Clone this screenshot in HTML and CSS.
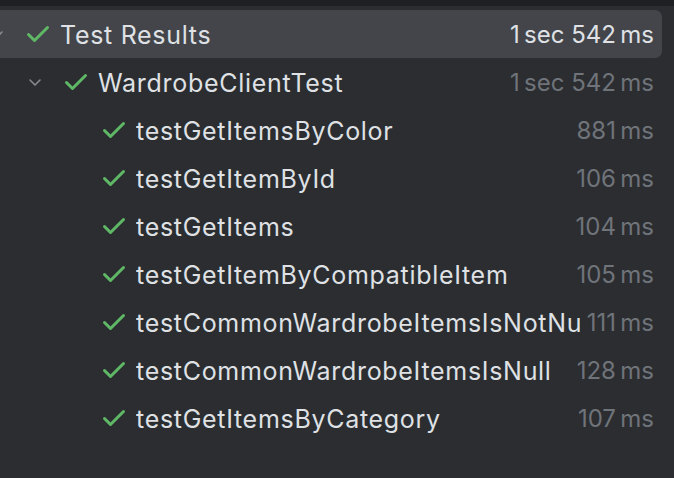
FILE: index.html
```html
<!DOCTYPE html>
<html>
<head>
<meta charset="utf-8">
<link rel="stylesheet" href="styles.css">
</head>
<body>
<div class="topbar"></div>
<div class="tree">
  <div class="row selected depth-0">
    <span class="chev"><svg viewBox="0 0 16 16" width="16" height="16"><path d="M3 6l5 5 5-5" fill="none" stroke="#868a91" stroke-width="1.6" stroke-linecap="round" stroke-linejoin="round"/></svg></span>
    <span class="check"><svg viewBox="0 0 24 18" width="24" height="18"><path d="M2.5 9.5l6 6L21.5 2.5" fill="none" stroke="#5fb865" stroke-width="3" stroke-linecap="round" stroke-linejoin="round"/></svg></span>
    <span class="name">Test Results</span>
    <span class="time">1&#8239;sec 542&#8239;ms</span>
  </div>
  <div class="row depth-1">
    <span class="chev"><svg viewBox="0 0 16 16" width="16" height="16"><path d="M3 6l5 5 5-5" fill="none" stroke="#868a91" stroke-width="1.6" stroke-linecap="round" stroke-linejoin="round"/></svg></span>
    <span class="check"><svg viewBox="0 0 24 18" width="24" height="18"><path d="M2.5 9.5l6 6L21.5 2.5" fill="none" stroke="#5fb865" stroke-width="3" stroke-linecap="round" stroke-linejoin="round"/></svg></span>
    <span class="name">WardrobeClientTest</span>
    <span class="time">1&#8239;sec 542&#8239;ms</span>
  </div>
  <div class="row depth-2">
    <span class="chev"></span>
    <span class="check"><svg viewBox="0 0 24 18" width="24" height="18"><path d="M2.5 9.5l6 6L21.5 2.5" fill="none" stroke="#5fb865" stroke-width="3" stroke-linecap="round" stroke-linejoin="round"/></svg></span>
    <span class="name">testGetItemsByColor</span>
    <span class="time">881&#8239;ms</span>
  </div>
  <div class="row depth-2">
    <span class="chev"></span>
    <span class="check"><svg viewBox="0 0 24 18" width="24" height="18"><path d="M2.5 9.5l6 6L21.5 2.5" fill="none" stroke="#5fb865" stroke-width="3" stroke-linecap="round" stroke-linejoin="round"/></svg></span>
    <span class="name">testGetItemById</span>
    <span class="time">106&#8239;ms</span>
  </div>
  <div class="row depth-2">
    <span class="chev"></span>
    <span class="check"><svg viewBox="0 0 24 18" width="24" height="18"><path d="M2.5 9.5l6 6L21.5 2.5" fill="none" stroke="#5fb865" stroke-width="3" stroke-linecap="round" stroke-linejoin="round"/></svg></span>
    <span class="name">testGetItems</span>
    <span class="time">104&#8239;ms</span>
  </div>
  <div class="row depth-2">
    <span class="chev"></span>
    <span class="check"><svg viewBox="0 0 24 18" width="24" height="18"><path d="M2.5 9.5l6 6L21.5 2.5" fill="none" stroke="#5fb865" stroke-width="3" stroke-linecap="round" stroke-linejoin="round"/></svg></span>
    <span class="name">testGetItemByCompatibleItem</span>
    <span class="time">105&#8239;ms</span>
  </div>
  <div class="row depth-2">
    <span class="chev"></span>
    <span class="check"><svg viewBox="0 0 24 18" width="24" height="18"><path d="M2.5 9.5l6 6L21.5 2.5" fill="none" stroke="#5fb865" stroke-width="3" stroke-linecap="round" stroke-linejoin="round"/></svg></span>
    <span class="name">testCommonWardrobeItemsIsNotNull</span>
    <span class="time">111&#8239;ms</span>
  </div>
  <div class="row depth-2">
    <span class="chev"></span>
    <span class="check"><svg viewBox="0 0 24 18" width="24" height="18"><path d="M2.5 9.5l6 6L21.5 2.5" fill="none" stroke="#5fb865" stroke-width="3" stroke-linecap="round" stroke-linejoin="round"/></svg></span>
    <span class="name">testCommonWardrobeItemsIsNull</span>
    <span class="time">128&#8239;ms</span>
  </div>
  <div class="row depth-2">
    <span class="chev"></span>
    <span class="check"><svg viewBox="0 0 24 18" width="24" height="18"><path d="M2.5 9.5l6 6L21.5 2.5" fill="none" stroke="#5fb865" stroke-width="3" stroke-linecap="round" stroke-linejoin="round"/></svg></span>
    <span class="name">testGetItemsByCategory</span>
    <span class="time">107&#8239;ms</span>
  </div>
</div>
</body>
</html>
```

FILE: styles.css
```css
html, body {
  margin: 0;
  padding: 0;
  background: #2b2d30;
  height: 100%;
  overflow: hidden;
}
body {
  font-family: Inter, "Noto Sans", sans-serif;
  color: #dfe1e5;
}
.topbar {
  height: 6px;
  background: #1f2023;
}
.tree {
  padding-top: 4px;
  display: flex;
  flex-direction: column;
}
.row {
  display: flex;
  align-items: center;
  height: 48px;
  margin-left: -20px;
  margin-right: 12px;
  padding-right: 8px;
  border-radius: 7px;
  font-size: 25px;
  white-space: nowrap;
}
.row.selected {
  background: #43454a;
}
.depth-0 { padding-left: 9px; }
.depth-1 { padding-left: 47px; }
.depth-2 { padding-left: 85px; }
.chev {
  width: 16px;
  height: 16px;
  flex: none;
  display: flex;
  margin-right: 21px;
}
.check {
  width: 24px;
  height: 18px;
  flex: none;
  display: flex;
  margin-right: 10px;
}
.name {
  flex: 1 1 auto;
  min-width: 0;
  overflow: hidden;
  letter-spacing: 0.7px;
  margin-right: 7px;
  padding-top: 1px;
}
.time {
  flex: none;
  font-size: 24px;
  color: #6f737a;
  padding-top: 1px;
}
.selected .time {
  color: #dfe1e5;
}
```
